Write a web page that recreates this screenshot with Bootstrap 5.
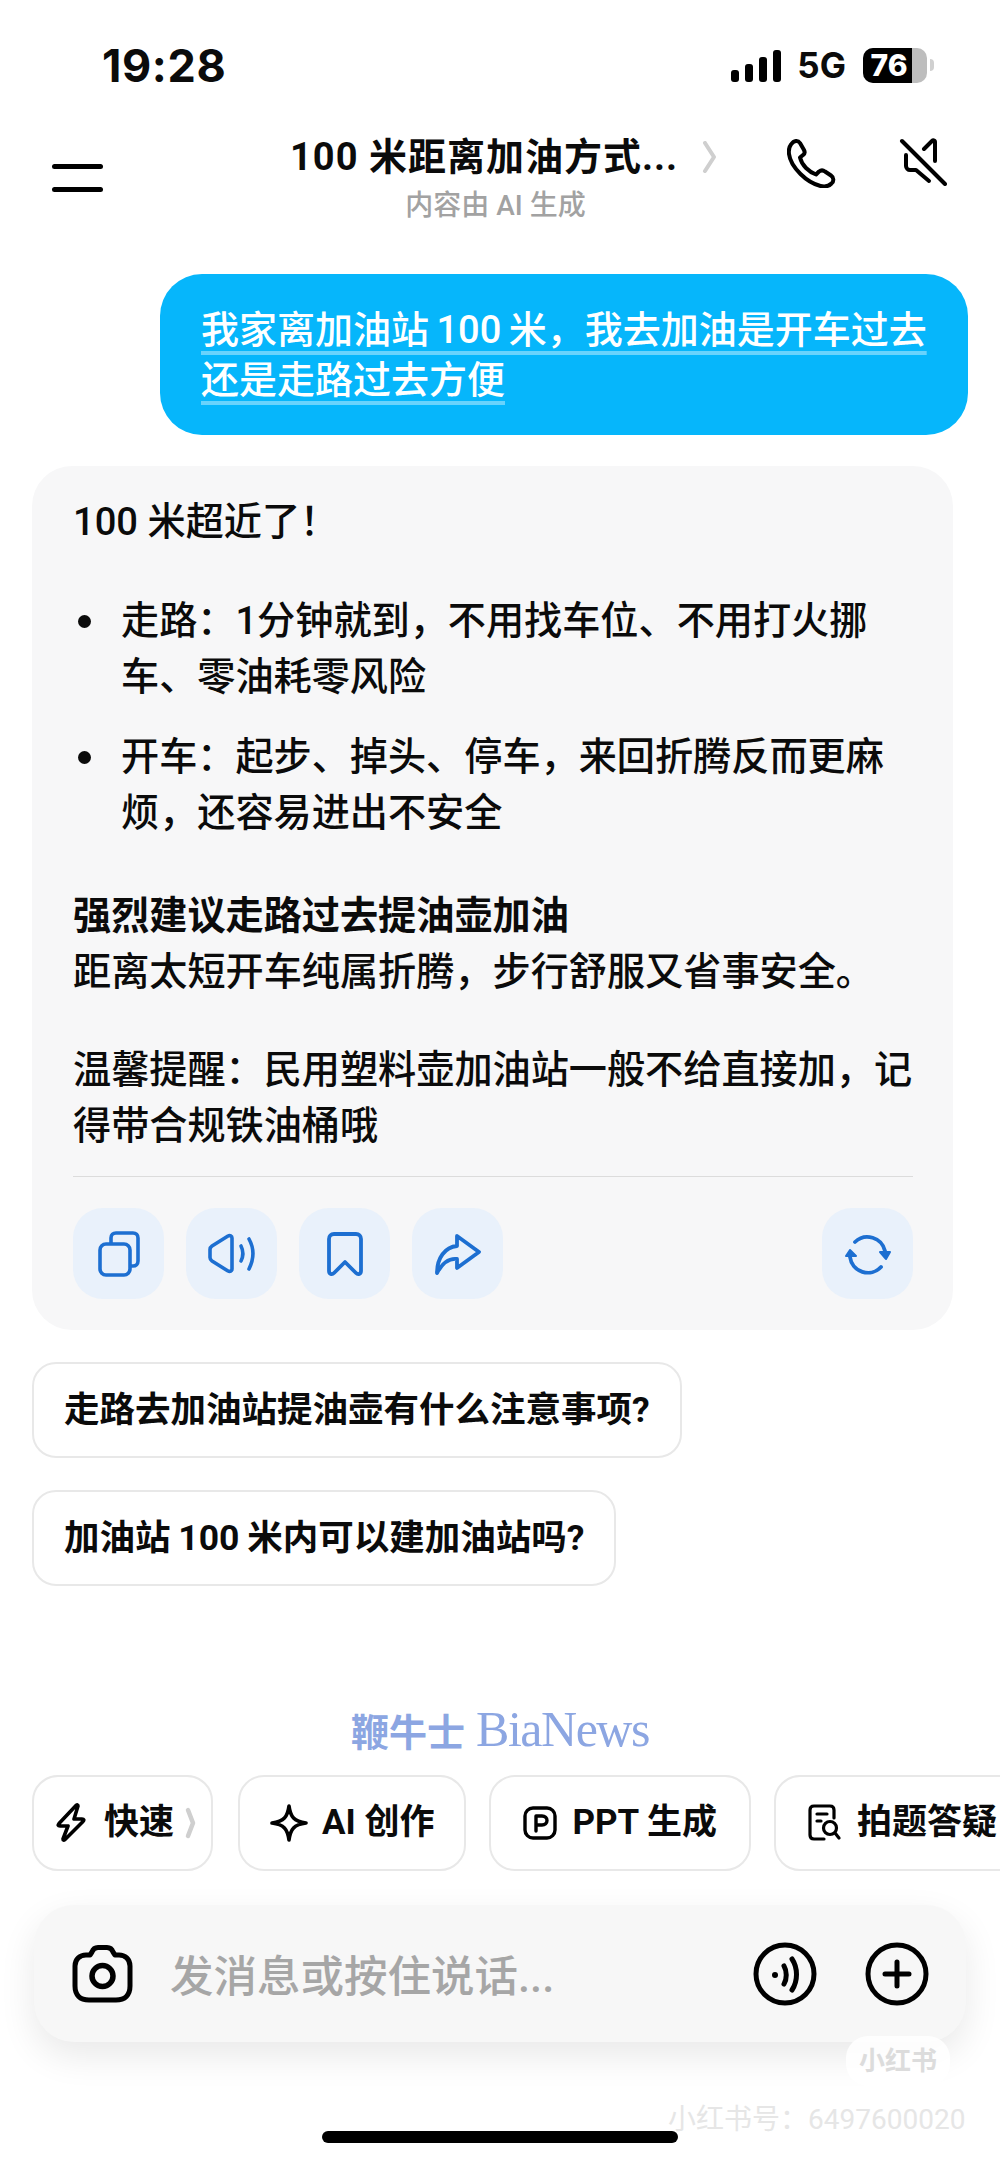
<!DOCTYPE html>
<html lang="zh-CN">
<head>
<meta charset="utf-8">
<title>100 米距离加油方式</title>
<link href="https://cdn.jsdelivr.net/npm/bootstrap@5.3.0/dist/css/bootstrap.min.css" rel="stylesheet">
<style>
body{background:#fff;font-family:Roboto,"Noto Sans CJK SC",sans-serif;color:#0b0b0b}
.screen{width:1000px;height:2164px;position:relative;overflow:hidden;background:#fff}
.sbar{height:130px;padding:0 66px 0 102px;font-family:Inter,"Noto Sans CJK SC",sans-serif}
.clock{font-size:45px;font-weight:700;letter-spacing:.6px;padding-top:2px}
.sig{gap:6px;height:33px;margin-right:16px}
.sig i{display:block;width:8px;background:#000;border-radius:3px}
.s1{height:12px}.s2{height:18px}.s3{height:25px}.s4{height:32px}
.fiveg{font-size:35px;font-weight:700;margin-right:17px;line-height:1}
.batt{width:64px;height:35px;border-radius:10px;background:#bdbdbd;position:relative;overflow:hidden}
.batt b{display:block;height:100%;background:#000}
.batt span{position:absolute;left:0;top:0;width:52px;text-align:center;color:#fff;font-size:30px;font-weight:800;line-height:35px}
.bcap{width:4px;height:12px;background:#d0d0d0;border-radius:0 4px 4px 0;margin-left:3px}
.hdr{height:120px;padding:0 53px 0 52px}
.hleft{width:152px;padding-top:10px}
.burger{width:51px;height:5px;background:#000;border-radius:3px}
.burger+.burger{margin-top:18px}
.hmid{padding-top:4px}
.htitleRow{margin-left:16px}
.htitle{font-size:38px;font-weight:700;line-height:46px;white-space:nowrap;letter-spacing:1px}
.hsub{font-size:28px;font-weight:500;color:#a2a2a2;line-height:38px;margin-top:7px}
.hicons{gap:62px;padding-top:8px}
.ubub{margin:24px 32px 0 160px;height:161px;padding:31px 30px 0 41px;background:#06b6fb;color:#fff;border-radius:42px;font-size:38px;font-weight:500;line-height:50px;word-spacing:-2px}
.ubub span{text-decoration:underline;text-decoration-color:rgba(255,255,255,.4);text-decoration-thickness:4px;text-underline-offset:8px;text-decoration-skip-ink:none}
.acard{margin:31px 47px 0 32px;padding:28px 40px 31px 41px;background:#f7f7f8;border:0;border-radius:40px;font-size:38.15px;font-weight:500;line-height:56px;color:#0b0b0b}
.acard p{margin:0}
.acard ul{margin:43px 0 47px;padding-left:48px;list-style:none}
.acard li{position:relative}
.acard li::before{content:"";position:absolute;left:-43px;top:22px;width:13px;height:13px;border-radius:50%;background:#0b0b0b}
.acard li+li{margin-top:24px}
.gap42{margin-top:42px!important}
.acard hr{margin:22px 0 31px;border-color:#dcdcdc;opacity:1}
.abtn{width:91px;height:91px;border-radius:30px;background:#e9f1fb;padding:0;border:0}
.abtns{gap:22px}
.sugg{margin:32px 0 0 32px;height:96px;padding:2px 30px 0;width:max-content;background:#fff;border:2px solid #e8e8e8;border-radius:24px;font-size:35.5px;font-weight:700;color:#0b0b0b;word-spacing:-1px}
.brand{margin-top:113px;height:60px;font-family:"Liberation Serif","Noto Sans CJK SC",serif;font-size:50px;line-height:60px;color:#8ca6e2;letter-spacing:-1.5px}
.brand span{font-family:"Noto Sans CJK SC",serif;font-size:38px;font-weight:700;letter-spacing:0}
.chips{margin-top:16px;padding-left:32px;gap:23px;overflow:hidden}
.chip{flex:none;height:96px;background:#fff;border:2px solid #e8e8e8;border-radius:26px;font-size:35px;font-weight:700;color:#0b0b0b;gap:14px;padding:0 30px}
.chip.c1{padding:0 15px 0 22px;gap:18px;margin-right:2px}
.chip.c1 .chev{margin-left:-7px}
.chip.c3{gap:15px;padding:0 32px}
.chip.c4{padding:0 0 0 32px;gap:15px;width:260px;justify-content:flex-start!important}
.chev{flex:none}
.ibox{margin:34px 34px 0;height:137px;padding:0 37px 0 38px;background:#f7f7f7;border-radius:40px;box-shadow:0 14px 36px rgba(0,0,0,.09)}
.ph{font-size:43.5px;font-weight:500;line-height:50px;padding-top:8px;color:#a6a6a6;margin-left:37px;white-space:nowrap}
.home{width:356px;height:12px;background:#000;border-radius:6px;margin:89px auto 0}
.wm1{position:absolute;left:846px;top:2036px;width:104px;height:50px;border-radius:22px;background:rgba(255,255,255,.85);color:#dcdcdc;font-size:26px;font-weight:700;line-height:50px;text-align:center}
.wm2{position:absolute;left:668px;top:2103px;color:#e6e6e6;font-size:28px;line-height:34px;white-space:nowrap}
</style>
</head>
<body>
<div class="screen">
  <div class="sbar d-flex align-items-center justify-content-between">
    <div class="clock">19:28</div>
    <div class="d-flex align-items-center">
      <div class="sig d-flex align-items-end"><i class="s1"></i><i class="s2"></i><i class="s3"></i><i class="s4"></i></div>
      <div class="fiveg">5G</div>
      <div class="batt"><b style="width:76%"></b><span>76</span></div>
      <div class="bcap"></div>
    </div>
  </div>

  <div class="hdr d-flex align-items-start">
    <div class="hleft"><div class="burger mt-4"></div><div class="burger"></div></div>
    <div class="hmid flex-grow-1 text-center">
      <div class="htitleRow d-flex justify-content-center align-items-center gap-4">
        <span class="htitle">100 米距离加油方式...</span>
        <svg class="chev" width="15" height="32" viewBox="0 0 15 32" fill="none"><path d="M3 2l9 14-9 14" stroke="#cfcfcf" stroke-width="4" stroke-linecap="round" stroke-linejoin="round"/></svg>
      </div>
      <div class="hsub">内容由 AI 生成</div>
    </div>
    <div class="hicons d-flex">
      <svg width="50" height="50" viewBox="0 0 50 50" fill="none" stroke="#000" stroke-width="4" stroke-linejoin="round" stroke-linecap="round"><path d="M4 6.500C7 2 11 2 13 5l4 7c1 2 .5 4-1 5l-3 2.500c1 4 3 7.500 6 10.500 3 3 6 5 10 6.500l3-3c2-1.500 4-1.500 6 0l6 4c3 2 3 6 .5 8-3 3-7 3.500-11 2.500-8-2-14-6-20-12S3 24 2 16c-.5-4 0-7 2-9.500z"/></svg>
      <svg width="48" height="48" viewBox="0 0 48 48" fill="none" stroke="#000" stroke-width="4" stroke-linejoin="round" stroke-linecap="round"><path d="M3 3l43 43"/><path d="M36 23V4c0-2-2-2-3-1l-8 8"/><path d="M7 17v11c0 2 2 4 4 4h6l13 11"/></svg>
    </div>
  </div>

  <div class="ubub"><span>我家离加油站 100 米，我去加油是开车过去</span><br><span>还是走路过去方便</span></div>

  <div class="card acard">
    <p>100 米超近了！</p>
    <ul>
      <li>走路：1分钟就到，不用找车位、不用打火挪车、零油耗零风险</li>
      <li>开车：起步、掉头、停车，来回折腾反而更麻烦，还容易进出不安全</li>
    </ul>
    <p><strong>强烈建议走路过去提油壶加油</strong><br>距离太短开车纯属折腾，步行舒服又省事安全。</p>
    <p class="gap42">温馨提醒：民用塑料壶加油站一般不给直接加，记得带合规铁油桶哦</p>
    <hr>
    <div class="d-flex abtns">
      <button type="button" class="btn abtn" aria-label="复制"><svg width="42" height="46" viewBox="0 0 42 46" fill="none" stroke="#1d6fd1" stroke-width="3.6" stroke-linejoin="round"><path d="M13 12V7c0-3 2-5 5-5h17c3 0 5 2 5 5v23c0 3-2 5-5 5h-3"/><rect x="2" y="13" width="30" height="31" rx="6"/></svg></button>
      <button type="button" class="btn abtn" aria-label="朗读"><svg width="47" height="42" viewBox="0 0 47 42" fill="none" stroke="#1d6fd1" stroke-width="3.6" stroke-linejoin="round" stroke-linecap="round"><path d="M24 5c0-2-2-3-4-2L4 13c-1.500 1-2 2-2 3.500v8c0 1.500.5 2.500 2 3.500l16 10c2 1 4 0 4-2z"/><path d="M33 13c2.500 5 2.500 10 0 15"/><path d="M41 6c5 9 5 20 0 30"/></svg></button>
      <button type="button" class="btn abtn" aria-label="收藏"><svg width="38" height="44" viewBox="0 0 38 44" fill="none" stroke="#1d6fd1" stroke-width="3.8" stroke-linejoin="round" stroke-linecap="round"><path d="M3 7c0-3 2-5 5-5h22c3 0 5 2 5 5v32c0 3-3 4-5 2L19 30 8 41c-2 2-5 1-5-2z"/></svg></button>
      <button type="button" class="btn abtn" aria-label="分享"><svg width="46" height="42" viewBox="0 0 46 42" fill="none" stroke="#1d6fd1" stroke-width="3.8" stroke-linejoin="round" stroke-linecap="round"><path d="M22 3l22 16-22 16v-9C14 25 8 29 2 40 2 25 10 14 22 13z"/></svg></button>
      <button type="button" class="btn abtn ms-auto" aria-label="重新生成"><svg width="48" height="42" viewBox="0 0 48 42" fill="none" stroke="#1d6fd1" stroke-width="3.8" stroke-linecap="round"><path d="M11 9A18 18 0 0 1 41 18"/><path d="M37 34A18 18 0 0 1 6 24"/><path d="M36 19h10l-4 7z" fill="#1d6fd1" stroke-linejoin="round" stroke-width="2"/><path d="M2 23h10l-6-6z" fill="#1d6fd1" stroke-linejoin="round" stroke-width="2"/></svg></button>
    </div>
  </div>

  <div class="sugg d-flex align-items-center">走路去加油站提油壶有什么注意事项?</div>
  <div class="sugg d-flex align-items-center">加油站 100 米内可以建加油站吗?</div>

  <div class="brand text-center"><span>鞭牛士</span> BiaNews</div>

  <div class="chips d-flex">
    <div class="chip c1 d-flex align-items-center justify-content-center">
      <svg width="30" height="42" viewBox="0 0 30 42" fill="none" stroke="#000" stroke-width="3.6" stroke-linejoin="round" stroke-linecap="round"><path d="M20 3.500Q22 2 22 4L18 17H26Q29 17 27 19.500L9 37.500Q7 39 7 37L12 24H4Q1 24 3 21.500z"/></svg>
      <span>快速</span>
      <svg class="chev" width="11" height="32" viewBox="0 0 11 32" fill="none"><path d="M3 3l5 13-5 13" stroke="#cfcfcf" stroke-width="4.500" stroke-linecap="round" stroke-linejoin="round"/></svg>
    </div>
    <div class="chip d-flex align-items-center justify-content-center">
      <svg width="38" height="38" viewBox="0 0 38 38" fill="none" stroke="#000" stroke-width="3.6" stroke-linejoin="round"><path d="M19 2c1.500 11 5 15.500 17 17-12 1.500-15.500 6-17 17-1.500-11-5-15.500-17-17 12-1.500 15.500-6 17-17z"/></svg>
      <span>AI 创作</span>
    </div>
    <div class="chip c3 d-flex align-items-center justify-content-center">
      <svg width="34" height="34" viewBox="0 0 34 34" fill="none" stroke="#000" stroke-width="3.4" stroke-linejoin="round" stroke-linecap="round"><rect x="2" y="2" width="30" height="30" rx="8"/><path d="M13 25V10h6c3 0 5 2 5 4.500S22 19 19 19h-6"/></svg>
      <span>PPT 生成</span>
    </div>
    <div class="chip c4 d-flex align-items-center justify-content-center">
      <svg width="34" height="38" viewBox="0 0 34 38" fill="none" stroke="#000" stroke-width="3.2" stroke-linecap="round" stroke-linejoin="round"><path d="M16 35H6c-2 0-4-1-4-4V6c0-3 2-4 4-4h16c2 0 4 1 4 4v8"/><path d="M9 10h10M9 17h4"/><circle cx="22" cy="24" r="6.500"/><path d="M27 29l4 5"/></svg>
      <span>拍题答疑</span>
    </div>
  </div>

  <div class="ibox d-flex align-items-center">
    <svg width="61" height="58" viewBox="0 0 61 58" fill="none" stroke="#000" stroke-width="5" stroke-linejoin="round"><path d="M20 7c1-3 3-4.500 6-4.500h9c3 0 5 1.500 6 4.500l2 3h4c6 0 11 4 11 11v20c0 9-5 14-14 14H17C8 55 3 50 3 41V21c0-7 5-11 11-11h4z"/><circle cx="30.500" cy="31" r="10.500" stroke-width="5.500"/></svg>
    <div class="ph flex-grow-1">发消息或按住说话...</div>
    <svg width="64" height="64" viewBox="0 0 64 64" fill="none" stroke="#000" stroke-width="5" stroke-linecap="round"><circle cx="32" cy="32" r="29"/><circle cx="22" cy="33" r="3" fill="#000" stroke="none"/><path d="M31 24c3 5 3 13 0 18"/><path d="M39 17c6 9 6 22 0 31"/></svg>
    <svg class="ms-5" width="64" height="64" viewBox="0 0 64 64" fill="none" stroke="#000" stroke-width="5" stroke-linecap="round"><circle cx="32" cy="32" r="29"/><path d="M32 20v24M20 32h24"/></svg>
  </div>

  <div class="home"></div>
  <div class="wm1">小红书</div>
  <div class="wm2">小红书号：6497600020</div>
</div>
<script src="https://cdn.jsdelivr.net/npm/bootstrap@5.3.0/dist/js/bootstrap.bundle.min.js"></script>
</body>
</html>
